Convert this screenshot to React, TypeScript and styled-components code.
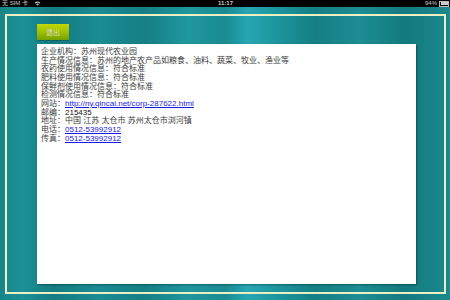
import React, { FC } from "react";
import styled, { createGlobalStyle } from "styled-components";

const GlobalStyle = createGlobalStyle`
  html, body {
    margin: 0;
    padding: 0;
    background: #000;
  }
  body {
    font-family: "Liberation Sans", "Noto Sans CJK SC", sans-serif;
  }
`;

interface infoLine {
  label: string;
  value: string;
  href?: string;
  dark?: boolean;
}

const lines: infoLine[] = [
  { label: "企业机构：", value: "苏州现代农业园" },
  {
    label: "生产情况信息：",
    value: "苏州的地产农产品如粮食、油料、蔬菜、牧业、渔业等",
  },
  { label: "农药使用情况信息：", value: "符合标准" },
  { label: "肥料使用情况信息：", value: "符合标准" },
  { label: "保鲜剂使用情况信息：", value: "符合标准" },
  { label: "检测情况信息：", value: "符合标准" },
  {
    label: "网站：",
    value: "http://ny.qincai.net/corp-287622.html",
    href: "#",
  },
  { label: "邮编：", value: "215435", dark: true },
  { label: "地址：", value: "中国 江苏 太仓市 苏州太仓市浏河镇" },
  { label: "电话：", value: "0512-53992912", href: "#" },
  { label: "传真：", value: "0512-53992912", href: "#" },
];

const App: FC = () => {
  return (
    <>
      <GlobalStyle />
      <StyledScreen>
        <StyledStatusBar>
          <StyledStatusLeft>
            无 SIM 卡
            <svg width="7" height="5" viewBox="0 0 14 10">
              <path
                d="M1 3.5 Q7 -1.5 13 3.5 L11.5 5 Q7 1.5 2.5 5 Z M4 6.2 Q7 4 10 6.2 L7 9.5 Z"
                fill="#bbb"
              />
            </svg>
          </StyledStatusLeft>
          <StyledClock>11:17</StyledClock>
          <StyledStatusRight>
            94%
            <StyledBattery>
              <StyledBatteryFill />
            </StyledBattery>
          </StyledStatusRight>
        </StyledStatusBar>
        <StyledMain>
          <StyledFrame>
            <StyledButton>退出</StyledButton>
            <StyledPanel>
              {lines.map((line) => (
                <StyledLine key={line.label}>
                  {line.label}
                  {line.href ? (
                    <StyledLink href={line.href}>{line.value}</StyledLink>
                  ) : (
                    <StyledValue $dark={line.dark}>{line.value}</StyledValue>
                  )}
                </StyledLine>
              ))}
            </StyledPanel>
          </StyledFrame>
        </StyledMain>
      </StyledScreen>
    </>
  );
};

const StyledScreen = styled.div`
  width: 450px;
  height: 300px;
  display: flex;
  flex-direction: column;
  overflow: hidden;
`;

const StyledStatusBar = styled.div`
  height: 7px;
  background: #000;
  color: #c8c8c8;
  font-size: 6px;
  line-height: 7px;
  display: grid;
  grid-template-columns: 1fr auto 1fr;
  align-items: center;
  padding: 0 1px 0 2px;
`;

const StyledStatusLeft = styled.div`
  display: flex;
  align-items: center;
  gap: 6px;
`;

const StyledClock = styled.div`
  font-weight: bold;
  font-size: 6px;
`;

const StyledStatusRight = styled.div`
  display: flex;
  justify-content: flex-end;
  align-items: center;
  gap: 2px;
`;

const StyledBattery = styled.div`
  width: 7px;
  height: 3px;
  border: 1px solid #bbb;
  padding: 0.5px;
  box-sizing: content-box;
  display: flex;
`;

const StyledBatteryFill = styled.div`
  flex: 1;
  background: #ccc;
`;

const StyledMain = styled.div`
  flex: 1;
  padding: 7px 4px 6px 5px;
  background:
    linear-gradient(
      90deg,
      #17858a 0%,
      #1b9096 5%,
      #147c82 12%,
      #1a8c92 22%,
      #157f85 32%,
      #1f979e 42%,
      #1a8b91 50%,
      #27a6b3 55%,
      #1e99a2 60%,
      #157f84 70%,
      #1c8d93 80%,
      #137a7e 90%,
      #1a8a8f 100%
    );
`;

const StyledFrame = styled.div`
  height: 100%;
  box-sizing: border-box;
  border: 2px solid #ecefc4;
  padding: 8px 28px 8px 30px;
  display: flex;
  flex-direction: column;
  gap: 4px;
`;

const StyledButton = styled.div`
  width: 32px;
  height: 16px;
  background: linear-gradient(180deg, #c2d80a 0%, #9fc000 50%, #76a000 100%);
  color: #d8dcc8;
  font-family: "Noto Sans CJK SC", sans-serif;
  font-size: 7px;
  display: flex;
  align-items: center;
  justify-content: center;
  box-shadow: 0 1px 1px rgba(0, 0, 0, 0.2);
`;

const StyledPanel = styled.div`
  flex: 1;
  background: #fff;
  padding: 4px 4px;
  box-shadow: 1px 1px 2px rgba(0, 0, 0, 0.35);
  color: #3a3a3a;
  font-size: 8px;
  line-height: 8.65px;
`;

const StyledLine = styled.div`
  white-space: nowrap;
`;

const StyledValue = styled.span<{ $dark?: boolean }>`
  color: ${(props) => (props.$dark ? "#111" : "inherit")};
`;

const StyledLink = styled.a`
  color: #1a1ae6;
  text-decoration: underline;
`;

export default App;
